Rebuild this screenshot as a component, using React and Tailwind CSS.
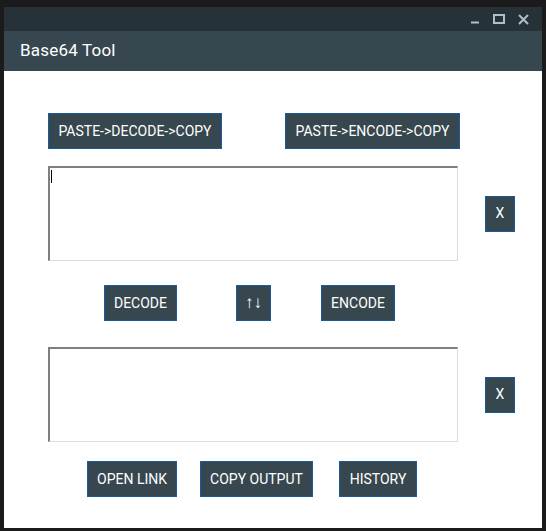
import React from 'react';

const btn =
  'flex items-center justify-center bg-[#37474f] border border-[#1a5a9e] text-white text-[14px] h-[36px]';

function Btn({ w, children, className = '' }) {
  return <button className={`${btn} ${w} ${className}`}>{children}</button>;
}

function Area({ caret }) {
  return (
    <div className="relative w-[410px] h-[95px] bg-white border-t-2 border-l-2 border-t-[#7f7f7f] border-l-[#7f7f7f] border-r border-b border-r-[#dcdcdc] border-b-[#dcdcdc]">
      {caret && <span className="absolute left-[1px] top-[2px] w-[1px] h-[13px] bg-black" />}
    </div>
  );
}

export default function App() {
  return (
    <div
      className="w-[546px] h-[531px] bg-[#1b1b1b] pt-[7px] px-[4px] pb-[3px]"
      style={{ fontFamily: 'Roboto, "Liberation Sans", sans-serif' }}
    >
      <div className="h-full flex flex-col bg-white">
        <div className="h-[24px] bg-[#263238] flex items-center justify-end pr-[13px] gap-[13px]">
          <svg width="10" height="10" viewBox="0 0 10 10">
            <rect x="1" y="7.5" width="8" height="2" fill="#b0bec5" />
          </svg>
          <svg width="12" height="10" viewBox="0 0 12 10">
            <rect x="1" y="1" width="10" height="8" fill="none" stroke="#b0bec5" strokeWidth="2" />
          </svg>
          <svg width="11" height="11" viewBox="0 0 11 11">
            <path d="M1 1 L10 10 M10 1 L1 10" stroke="#b0bec5" strokeWidth="2" />
          </svg>
        </div>
        <div className="h-[40px] bg-[#37474f] flex items-center pl-[16px] text-white text-[17px] font-normal tracking-[0.2px]">
          Base64 Tool
        </div>

        <div className="flex flex-col pl-[44px]">
          <div className="flex mt-[42px] gap-[63px]">
            <Btn w="w-[174px] h-[35px]">PASTE-&gt;DECODE-&gt;COPY</Btn>
            <Btn w="w-[175px] h-[35px]">PASTE-&gt;ENCODE-&gt;COPY</Btn>
          </div>

          <div className="flex items-center mt-[17px]">
            <Area caret />
            <Btn w="w-[30px] ml-[27px]">X</Btn>
          </div>

          <div className="flex mt-[24px] ml-[56px]">
            <Btn w="w-[73px]">DECODE</Btn>
            <Btn w="w-[35px] ml-[59px] text-[#b0bec5] text-[17px]">↑↓</Btn>
            <Btn w="w-[74px] ml-[50px]">ENCODE</Btn>
          </div>

          <div className="flex items-center mt-[26px]">
            <Area />
            <Btn w="w-[30px] ml-[27px]">X</Btn>
          </div>

          <div className="flex mt-[19px] ml-[39px]">
            <Btn w="w-[90px]">OPEN LINK</Btn>
            <Btn w="w-[113px] ml-[23px]">COPY OUTPUT</Btn>
            <Btn w="w-[78px] ml-[26px]">HISTORY</Btn>
          </div>
        </div>
      </div>
    </div>
  );
}
